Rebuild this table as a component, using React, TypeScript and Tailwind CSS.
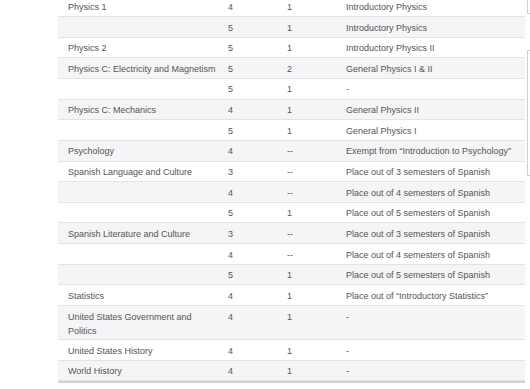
const rows: [string, string, string, string][] = [
  ['Physics 1', '4', '1', 'Introductory Physics'],
  ['', '5', '1', 'Introductory Physics'],
  ['Physics 2', '5', '1', 'Introductory Physics II'],
  ['Physics C: Electricity and Magnetism', '5', '2', 'General Physics I & II'],
  ['', '5', '1', '-'],
  ['Physics C: Mechanics', '4', '1', 'General Physics II'],
  ['', '5', '1', 'General Physics I'],
  ['Psychology', '4', '--', 'Exempt from \u201cIntroduction to Psychology\u201d'],
  ['Spanish Language and Culture', '3', '--', 'Place out of 3 semesters of Spanish'],
  ['', '4', '--', 'Place out of 4 semesters of Spanish'],
  ['', '5', '1', 'Place out of 5 semesters of Spanish'],
  ['Spanish Literature and Culture', '3', '--', 'Place out of 3 semesters of Spanish'],
  ['', '4', '--', 'Place out of 4 semesters of Spanish'],
  ['', '5', '1', 'Place out of 5 semesters of Spanish'],
  ['Statistics', '4', '1', 'Place out of \u201cIntroductory Statistics\u201d'],
  ['United States Government and Politics', '4', '1', '-'],
  ['United States History', '4', '1', '-'],
  ['World History', '4', '1', '-'],
];

export default function App() {
  return (
    <div className="w-[530px] h-[389px] overflow-hidden bg-white flex font-['Liberation_Sans',Arial,sans-serif] text-[9px] text-[#555]">
      {/* table */}
      <div className="ml-[58px] w-[467px] -mt-[3.6px] border-b-2 border-[#d2d2d2] self-start">
        {rows.map((r, i) => (
          <div
            key={i}
            className={`grid grid-cols-[160px_59px_59px_1fr] border-b border-[#e3e3e3] leading-[14px] pt-[3.5px] ${
              i === 15 ? 'h-[34px]' : 'h-[20.65px]'
            } ${i % 2 === 1 ? 'bg-[#f5f4f6]' : 'bg-white'}`}
          >
            <div className={`pl-[10px] ${i === 15 ? 'pr-[18px]' : ''}`}>{r[0]}</div>
            <div className="pl-[10px]">{r[1]}</div>
            <div className="pl-[10px]">{r[2]}</div>
            <div className="pl-[10px] whitespace-nowrap">{r[3]}</div>
          </div>
        ))}
      </div>
      {/* sidebar boxes peeking in on the right */}
      <div className="ml-[2px] flex-1 flex flex-col">
        <div className="h-[14px] border-l border-b border-[#cfcfcf]" />
        <div className="mt-[36px] h-[126px] border-l border-t border-b border-[#cfcfcf]" />
      </div>
    </div>
  );
}
